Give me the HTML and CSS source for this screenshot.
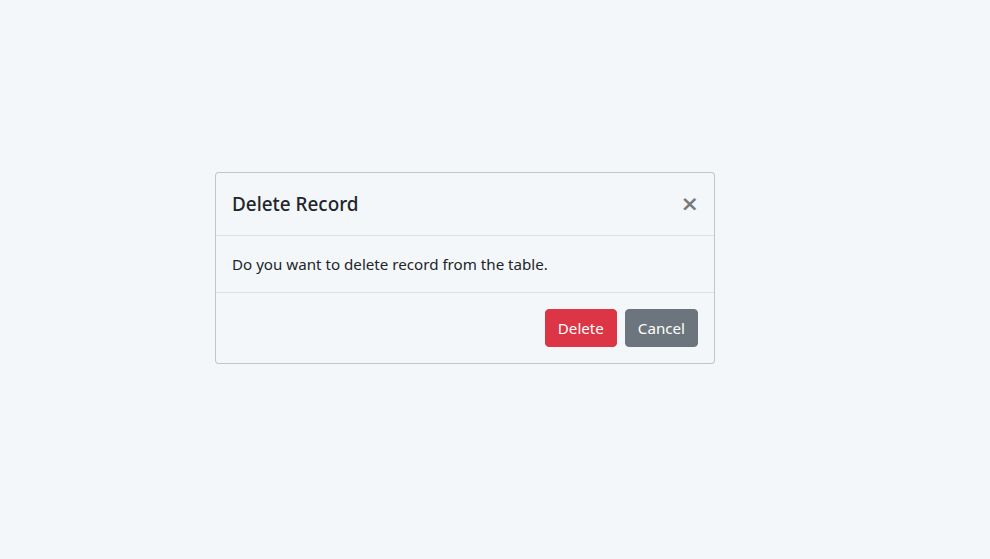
FILE: index.html
```html
<!DOCTYPE html>
<html lang="en">
<head>
<meta charset="utf-8">
<title>Delete Record</title>
<link rel="stylesheet" href="styles.css">
</head>
<body>
<div class="page">
  <div class="modal">
    <div class="modal-header">
      <h5 class="modal-title">Delete Record</h5>
      <button class="close" type="button" aria-label="Close">&times;</button>
    </div>
    <div class="modal-body">Do you want to delete record from the table.</div>
    <div class="modal-footer">
      <button class="btn btn-danger" type="button">Delete</button>
      <button class="btn btn-secondary" type="button">Cancel</button>
    </div>
  </div>
</div>
</body>
</html>
```
FILE: styles.css
```css
html, body {
  margin: 0;
  padding: 0;
  background: #f4f7f9;
}
body {
  font-family: "Noto Sans", "Open Sans", sans-serif;
  font-size: 15.15px;
  line-height: 24px;
  color: #212529;
}
.page {
  padding: 172px 0 0 215px;
}
.modal {
  width: 500px;
  box-sizing: border-box;
  border: 1px solid rgba(0,0,0,.2);
  border-radius: 4px;
  background: #f4f7f9;
}
.modal-header {
  display: flex;
  align-items: flex-start;
  justify-content: space-between;
  padding: 16px;
  border-bottom: 1px solid #dee2e6;
}
.modal-title {
  margin: 0;
  font-size: 18.9px;
  font-weight: 500;
  line-height: 30px;
}
.close {
  margin: -16px -17px -16px auto;
  padding: 16px;
  background: transparent;
  border: 0;
  font-family: "DejaVu Sans", sans-serif;
  font-size: 22px;
  font-weight: 700;
  line-height: 30px;
  color: #000;
  opacity: .5;
  text-shadow: 0 1px 0 #fff;
}
.modal-body {
  padding: 16px;
}
.modal-footer {
  display: flex;
  justify-content: flex-end;
  align-items: center;
  padding: 12px;
  border-top: 1px solid #dee2e6;
}
.btn {
  margin: 4px;
  padding: 6px 12px;
  border: 1px solid transparent;
  border-radius: 4px;
  font-family: inherit;
  font-size: 15.15px;
  line-height: 24px;
  color: #fff;
}
.btn-danger {
  background: #dc3545;
  border-color: #dc3545;
}
.btn-secondary {
  background: #6c757d;
  border-color: #6c757d;
}
```
